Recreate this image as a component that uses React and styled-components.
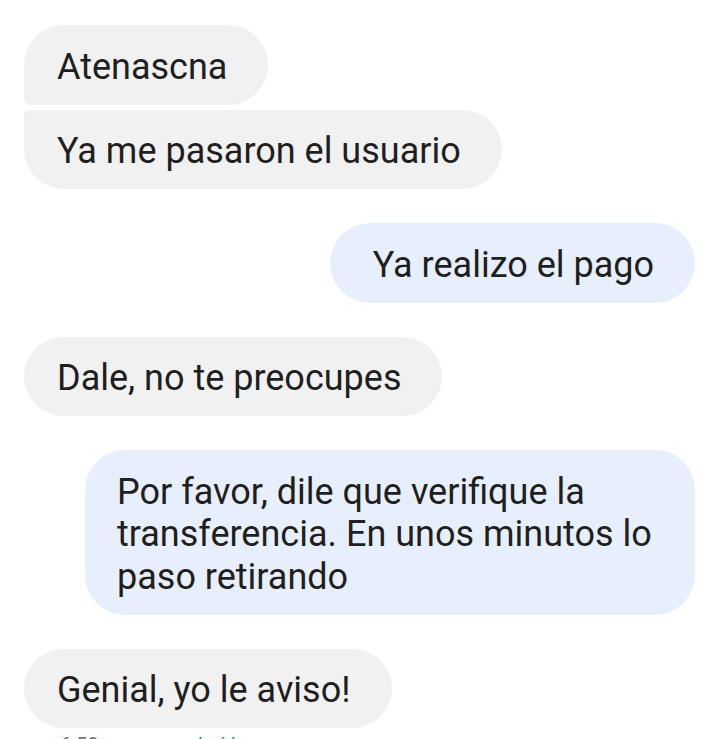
import React from "react";
import styled, { createGlobalStyle } from "styled-components";

const GlobalStyle = createGlobalStyle`
    html, body {
        margin: 0;
        padding: 0;
        background: #ffffff;
        overflow: hidden;
    }
    body {
        font-family: Roboto, "Noto Sans", sans-serif;
    }
`;

const messages = [
    { id: 1, mine: false, text: "Atenascna", group: "first" },
    { id: 2, mine: false, text: "Ya me pasaron el usuario", group: "last" },
    { id: 3, mine: true, text: "Ya realizo el pago" },
    { id: 4, mine: false, text: "Dale, no te preocupes" },
    { id: 5, mine: true, wide: true, text: "Por favor, dile que verifique la transferencia. En unos minutos lo paso retirando" },
    { id: 6, mine: false, text: "Genial, yo le aviso!" },
];

const App = () => {
    return (
        <React.Fragment>
            <GlobalStyle />
            <Thread>
                {messages.map((m, i) => {
                    const prev = messages[i - 1];
                    const tight = prev && prev.mine === m.mine && prev.group === "first";
                    return (
                        <Row key={m.id} mine={m.mine} tight={tight}>
                            <Bubble mine={m.mine} wide={m.wide} group={m.group}>{m.text}</Bubble>
                        </Row>
                    );
                })}
                <Status>
                    <span>6:52 p. m.</span>
                    <Seen>Leído</Seen>
                </Status>
            </Thread>
        </React.Fragment>
    );
};

export default App;

const Thread = styled.div`
    display: flex;
    flex-direction: column;
    padding: 25px 25px 0 24px;
`;

const Row = styled.div`
    display: flex;
    justify-content: ${(p) => (p.mine ? "flex-end" : "flex-start")};
    margin-top: ${(p) => (p.tight ? "5px" : "34px")};
    &:first-child {
        margin-top: 0;
    }
`;

const Bubble = styled.div`
    box-sizing: border-box;
    max-width: 610px;
    padding: 20.5px 41px 16.5px ${(p) => (p.wide ? "32px" : p.mine ? "43px" : "33px")};
    font-size: 36px;
    line-height: 42.5px;
    color: #1f1f1f;
    background: ${(p) => (p.mine ? "#e8effc" : "#f1f1f1")};
    border-radius: 40px;
    ${(p) => p.group === "first" && "border-bottom-left-radius: 6px;"}
    ${(p) => p.group === "last" && "border-top-left-radius: 6px;"}
`;

const Status = styled.div`
    display: flex;
    margin-top: 5px;
    padding-left: 36px;
    font-size: 20px;
    line-height: 24px;
    color: #747775;
`;

const Seen = styled.span`
    margin-left: 50px;
    color: #1a9fa6;
`;
